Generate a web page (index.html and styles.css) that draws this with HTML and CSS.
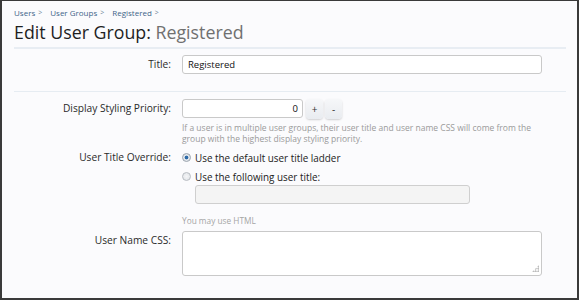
FILE: index.html
```html
<!DOCTYPE html>
<html>
<head>
<meta charset="utf-8">
<link rel="stylesheet" href="styles.css">
</head>
<body>
<div class="frame">
  <div class="breadcrumb">
    <a href="#">Users</a><span class="sep">&gt;</span>
    <a href="#">User Groups</a><span class="sep">&gt;</span>
    <a href="#">Registered</a><span class="sep">&gt;</span>
  </div>
  <h1 class="title">Edit User Group: <span class="title-sub">Registered</span></h1>

  <div class="row row-title">
    <label class="label">Title:</label>
    <div class="control">
      <input class="text wide" type="text" value="Registered">
    </div>
  </div>

  <div class="divider"></div>

  <div class="row row-priority">
    <label class="label">Display Styling Priority:</label>
    <div class="control">
      <div class="spin">
        <input class="text num" type="text" value="0">
        <button class="spin-btn">+</button>
        <button class="spin-btn">-</button>
      </div>
      <p class="explain">If a user is in multiple user groups, their user title and user name CSS will come from the group with the highest display styling priority.</p>
    </div>
  </div>

  <div class="row row-override">
    <label class="label">User Title Override:</label>
    <div class="control">
      <label class="radio"><input type="radio" name="o" checked><span>Use the default user title ladder</span></label>
      <label class="radio"><input type="radio" name="o"><span>Use the following user title:</span></label>
      <input class="text disabled" type="text" disabled>
      <p class="hint">You may use HTML</p>
    </div>
  </div>

  <div class="row row-css">
    <label class="label">User Name CSS:</label>
    <div class="control">
      <div class="textarea"><span class="grip"></span></div>
    </div>
  </div>
</div>
</body>
</html>
```

FILE: styles.css
```css
html, body {
  margin: 0;
  padding: 0;
}
body {
  width: 579px;
  height: 300px;
  overflow: hidden;
  font-family: "Open Sans", "Noto Sans", sans-serif;
}
.frame {
  box-sizing: border-box;
  width: 579px;
  height: 300px;
  border-top: 1px solid #3a3a3a;
  border-left: 2px solid #3a3a3a;
  border-right: 2px solid #3a3a3a;
  border-bottom: 2px solid #3a3a3a;
  background: #fbfbfd;
  padding: 0 11px 0 12px;
  overflow: hidden;
}
.breadcrumb {
  font-size: 8px;
  line-height: 12px;
  padding-top: 6px;
  color: #6a7f96;
  display: flex;
  align-items: center;
}
.breadcrumb a {
  color: #3f6589;
  text-decoration: none;
}
.breadcrumb .sep {
  color: #6a7f96;
  margin: 0 8px 0 3px;
  font-size: 7px;
}
.title {
  margin: 0;
  font-weight: normal;
  font-size: 17.8px;
  line-height: 22px;
  color: #1f1f1f;
  padding: 2px 0 4px;
  border-bottom: 2px solid #e8edf3;
}
.title-sub {
  color: #707070;
}
.row {
  display: flex;
  align-items: flex-start;
}
.label {
  width: 157px;
  flex: none;
  text-align: right;
  font-size: 10.2px;
  color: #2a2a2a;
  line-height: 19px;
  margin-right: 11px;
}
.control {
  flex: 1;
  min-width: 0;
}
.row-title {
  padding-top: 6px;
  padding-bottom: 17px;
}
.divider {
  height: 1px;
  background: #e6ecf2;
}
.text {
  box-sizing: border-box;
  display: block;
  height: 19px;
  border: 1px solid #c9c9c9;
  border-radius: 3px;
  background: #fff;
  font-family: inherit;
  font-size: 9.5px;
  color: #111;
  padding: 0 5px;
  margin: 0;
  outline: none;
}
.wide {
  width: 360px;
}
.row-priority {
  padding-top: 7px;
}
.spin {
  display: flex;
  align-items: flex-start;
}
.num {
  width: 121px;
  text-align: right;
  padding-right: 4px;
}
.spin-btn {
  box-sizing: border-box;
  width: 17px;
  height: 20px;
  margin-left: 3px;
  border: none;
  border-radius: 4px;
  background: linear-gradient(#f6f7f9, #e9ecf0);
  box-shadow: 0 1px 2px rgba(0,0,0,0.18);
  font-family: inherit;
  font-size: 10px;
  color: #333;
  padding: 0;
  line-height: 19px;
}
.spin-btn + .spin-btn {
  margin-left: 2px;
}
.explain {
  max-width: 362px;
  margin: 3px 0 0;
  font-size: 8.5px;
  line-height: 11px;
  color: #9a9a9a;
}
.row-override {
  padding-top: 4px;
}
.radio {
  display: flex;
  align-items: center;
  height: 19px;
  font-size: 9.9px;
  color: #222;
}
.radio input {
  -webkit-appearance: none;
  appearance: none;
  box-sizing: border-box;
  flex: none;
  width: 9px;
  height: 9px;
  margin: 0 4px 0 0;
  border-radius: 50%;
  border: 1px solid #b8bcc2;
  background: radial-gradient(circle, #f4f5f7 0, #dfe2e6 100%);
}
.radio input:checked {
  background: radial-gradient(circle, #2c6aa8 0, #2c6aa8 30%, #dfe4ea 45%, #e8ebef 100%);
  border-color: #9aa3ad;
}
.disabled {
  width: 275px;
  margin-left: 13px;
  margin-top: -1px;
  background: #f4f4f4;
  border-color: #cfcfcf;
}
.hint {
  margin: 11px 0 0;
  font-size: 8.3px;
  line-height: 11px;
  color: #a5a5a5;
}
.row-css {
  padding-top: 5px;
}
.textarea {
  box-sizing: border-box;
  position: relative;
  width: 360px;
  height: 45px;
  border: 1px solid #c9c9c9;
  border-radius: 3px;
  background: #fff;
}
.grip {
  position: absolute;
  right: 2px;
  bottom: 3px;
  width: 7px;
  height: 7px;
  background:
    radial-gradient(circle, #b0b0b0 0.8px, transparent 1px) 0 0 / 2.5px 2.5px;
  clip-path: polygon(100% 0, 100% 100%, 0 100%);
}
```
